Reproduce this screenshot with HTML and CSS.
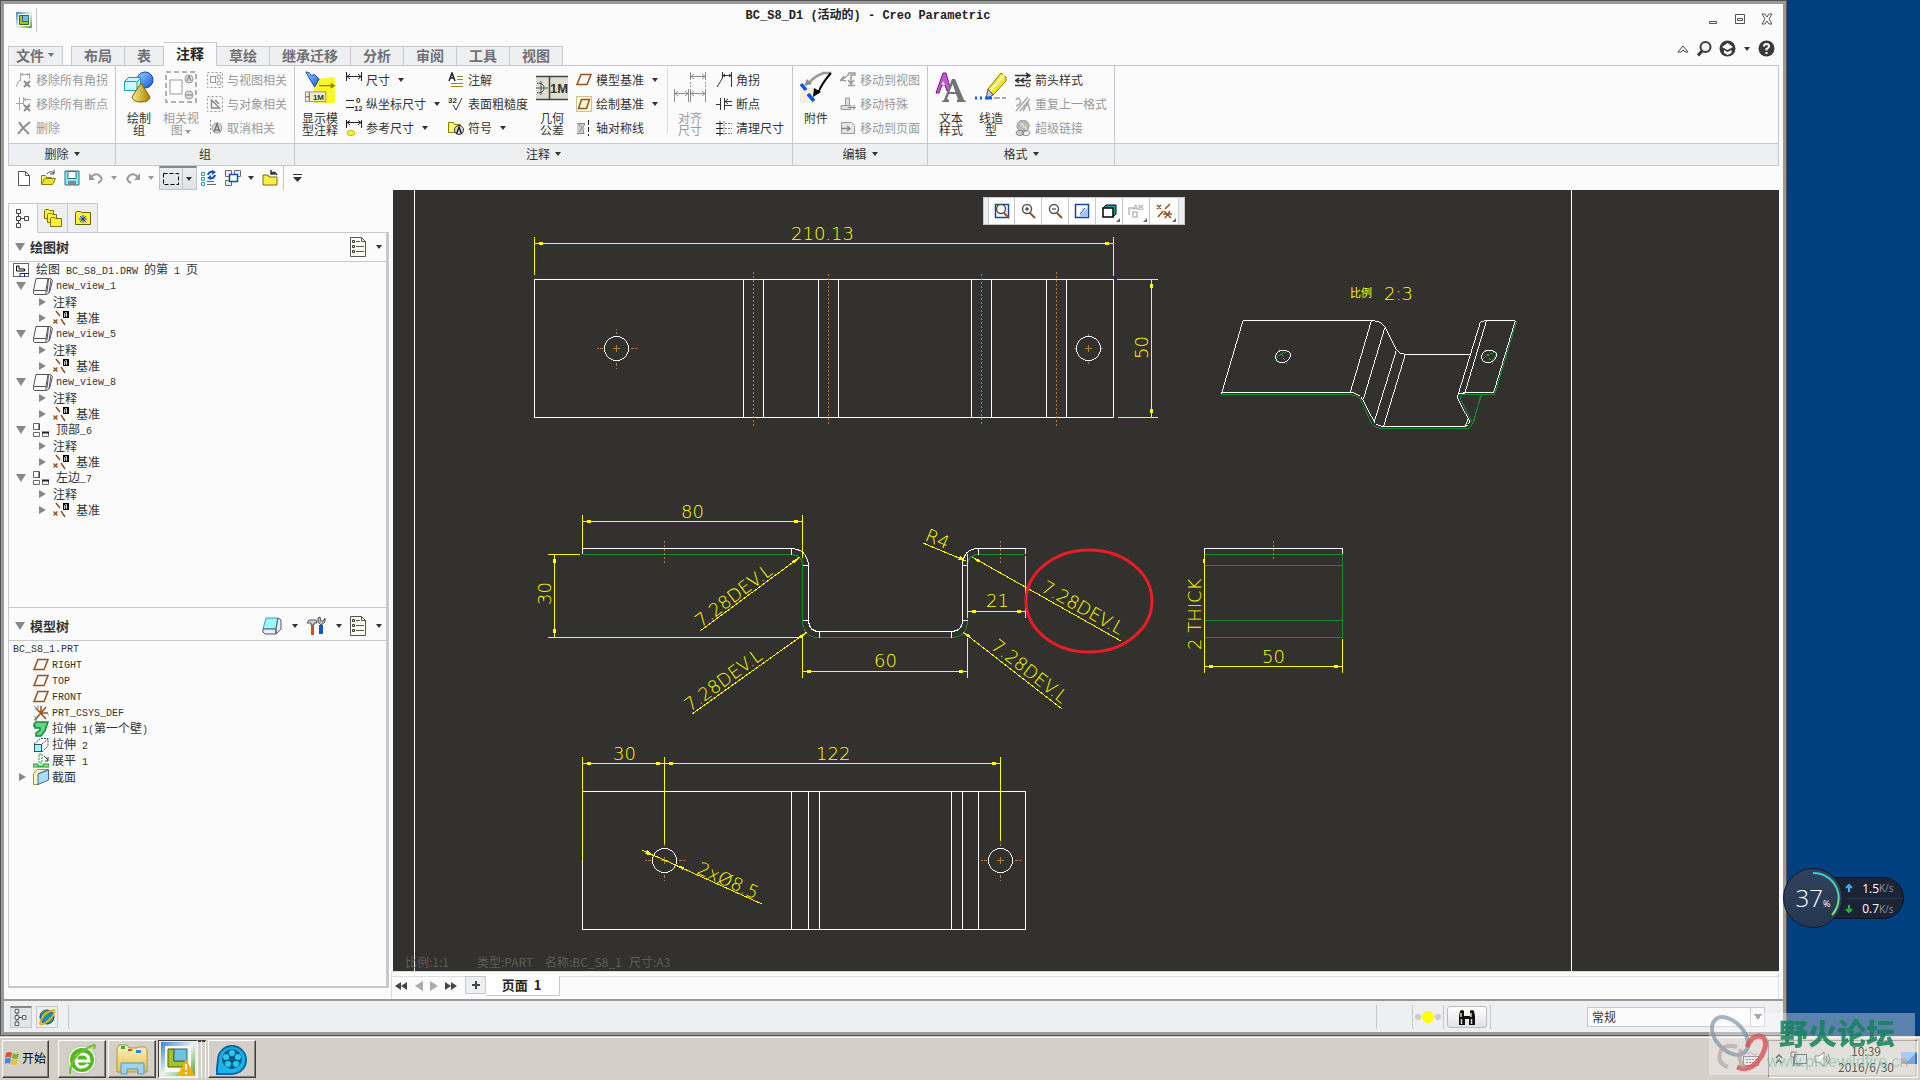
FILE: index.html
```html
<!DOCTYPE html>
<html lang="zh-CN">
<head>
<meta charset="utf-8">
<title>BC_S8_D1 (活动的) - Creo Parametric</title>
<link rel="stylesheet" href="styles.css">
</head>
<body>
<svg class="defs" width="0" height="0" aria-hidden="true">
  <defs>
    <linearGradient id="gBlue" x1="0" y1="0" x2="1" y2="1"><stop offset="0" stop-color="#9fd4ff"/><stop offset="1" stop-color="#0a55e0"/></linearGradient>
    <linearGradient id="gGold" x1="0" y1="0" x2="1" y2="0"><stop offset="0" stop-color="#fff08a"/><stop offset="1" stop-color="#a08000"/></linearGradient>
    <linearGradient id="gRing" x1="0" y1="0" x2="0" y2="1"><stop offset="0" stop-color="#2fd0d8"/><stop offset="1" stop-color="#86d870"/></linearGradient>
    <linearGradient id="gFolder" x1="0" y1="0" x2="0" y2="1"><stop offset="0" stop-color="#fdf3bc"/><stop offset="1" stop-color="#e5c254"/></linearGradient>
    <linearGradient id="gApp" x1="0" y1="0" x2="1" y2="1"><stop offset="0" stop-color="#2f86d6"/><stop offset=".5" stop-color="#e8f4ee"/><stop offset="1" stop-color="#4aa52c"/></linearGradient>
  </defs>
  <symbol id="app" viewBox="0 0 16 16"><rect width="16" height="16" fill="url(#gApp)"/><rect x="2" y="2" width="12" height="12" fill="#f4f8f4"/><path d="M3.500 3.500h3v6h6v3h-9z" fill="#a4c51e" stroke="#4c5a28"/><rect x="6.500" y="3.500" width="6" height="6" fill="#6cc3de" stroke="#40606a"/></symbol>
  <symbol id="rm-jog" viewBox="0 0 16 16"><path d="M4.500 1v8M13.500 1v6M5 2.500h8M0 15l2-5 2-2M7 1.500l-2 1 2 1M11 1.500l2 1-2 1" fill="none" stroke="#a8a8a8"/><path d="M8 9l6 6M14 9l-6 6" stroke="#8c8c8c" stroke-width="2"/></symbol>
  <symbol id="rm-brk" viewBox="0 0 16 16"><path d="M3.500 1v13M7.500 1v8M0 7.500h7M8 3.500h7M10 2l-2 1.500 2 1.500M9 12l5-5" fill="none" stroke="#a8a8a8"/><path d="M8 9l6 6M14 9l-6 6" stroke="#8c8c8c" stroke-width="2"/></symbol>
  <symbol id="del" viewBox="0 0 16 16"><path d="M3 2q4 7 10 12M14 2Q7 7 2 14" fill="none" stroke="#8c8c8c" stroke-width="2"/></symbol>
  <symbol id="shapes" viewBox="0 0 32 32"><circle cx="22" cy="9" r="8" fill="url(#gBlue)" stroke="#0648b8"/><path d="M1.500 10.500l4-4h12v13h-16z" fill="#c8fbff" stroke="#1a9aa8"/><path d="M1.500 10.500h12M18 7l-4 4v9" fill="none" stroke="#1a9aa8"/><path d="M18 12l9 14q-1 5-9 5t-9-5z" fill="url(#gGold)" stroke="#7a6200"/></symbol>
  <symbol id="relview" viewBox="0 0 32 32"><rect x="1" y="1" width="30" height="30" fill="none" stroke="#b0b0b0" stroke-width="2" stroke-dasharray="5 3"/><rect x="5" y="9" width="12" height="14" fill="#fff" stroke="#9a9a9a"/><circle cx="24" cy="8" r="4" fill="#ddd" stroke="#999"/><path d="M22 10l2-5 2 5" fill="none" stroke="#777"/><circle cx="24" cy="24" r="4" fill="#ddd" stroke="#999"/><path d="M21 24h6" stroke="#777"/></symbol>
  <symbol id="rv" viewBox="0 0 16 16"><rect x=".5" y=".5" width="15" height="15" fill="none" stroke="#999" stroke-dasharray="2 2"/><rect x="3.500" y="4.500" width="5" height="6" fill="none" stroke="#999"/><circle cx="12" cy="5" r="2" fill="none" stroke="#999"/><circle cx="12" cy="11" r="2" fill="none" stroke="#999"/></symbol>
  <symbol id="ro" viewBox="0 0 16 16"><rect x=".5" y=".5" width="15" height="15" fill="none" stroke="#999" stroke-dasharray="2 2"/><path d="M4.500 4v8h8zM8 4l4 4" fill="none" stroke="#888" stroke-width="1.500"/></symbol>
  <symbol id="rc" viewBox="0 0 16 16"><path d="M3.500 0v16" stroke="#999" stroke-dasharray="2 2"/><circle cx="10" cy="8" r="5" fill="#ddd" stroke="#999"/><path d="M7 12l3-8 3 8M8 10h4" fill="none" stroke="#777" stroke-width="1.500"/></symbol>
  <symbol id="dim" viewBox="0 0 16 16"><path d="M.5 0v9M15.500 0v9M1 4.500h14M4 2L1 4.500 4 7M12 2l3 2.500L12 7" fill="none" stroke="#222"/></symbol>
  <symbol id="refdim" viewBox="0 0 16 16"><path d="M.5 0v8M15.500 0v8M1 2.500h14M4 .5L1 2.500 4 5M12 .5l3 2L12 5" fill="none" stroke="#222"/><ellipse cx="5" cy="13" rx="4" ry="2.500" fill="#ffef3a" stroke="#c8b400"/></symbol>
  <symbol id="note" viewBox="0 0 16 16"><path d="M1 9l3-8 3 8M2 6h4" fill="none" stroke="#222" stroke-width="1.500"/><path d="M9 4.500h6M9 7.500h6M3 11.500h12M3 14.500h12" stroke="#998a10"/></symbol>
  <symbol id="sym" viewBox="0 0 16 16"><path d="M.5 12.500v-10h5l1 2h6v8z" fill="#fff27a" stroke="#8a8000"/><circle cx="11" cy="10" r="4.500" fill="#ddd" stroke="#333"/><path d="M8.500 14l2.500-7 2.500 7" fill="none" stroke="#222" stroke-width="1.500"/></symbol>
  <symbol id="plane" viewBox="0 0 16 16"><path d="M1 12.500L5 2.500h10l-4 10z" fill="none" stroke="#98501e" stroke-width="1.500"/></symbol>
  <symbol id="plane2" viewBox="0 0 16 16"><rect x=".5" y=".5" width="15" height="15" fill="#fffbd8" stroke="#c8c290"/><path d="M2.500 12.500l3-9h8l-3 9z" fill="none" stroke="#98501e" stroke-width="1.500"/></symbol>
  <symbol id="axis" viewBox="0 0 16 16"><path d="M1 3.500h8l-2 4 1 1-1 1 1 4H1M3 4l3 4-3 4" fill="#ccc" stroke="#888"/><path d="M12.500 0v16" stroke="#222" stroke-dasharray="5 2"/></symbol>
  <symbol id="align" viewBox="0 0 32 32"><path d="M.5 18v13M14.500 18v13M1 22.500h13M16.500 18v13M31.500 18v13M17 22.500h14M16.500 1v8M31.500 1v8M17 5.500h14M4 20l-3 2.500L4 25M11 20l3 2.500L11 25M20 20l-3 2.500 3 2.500M28 20l3 2.500-3 2.500M20 3l-3 2.500L20 8M28 3l3 2.500L28 8" fill="none" stroke="#8c8c8c"/><path d="M16.500 11v6M31.500 11v6" stroke="#999" stroke-dasharray="2 1"/></symbol>
  <symbol id="jog" viewBox="0 0 16 16"><path d="M6.500 0v6L1 15M15.500 0v15M7 3.500h8M9 2L7 3.500 9 5M13 2l2 1.500L13 5" fill="none" stroke="#333"/></symbol>
  <symbol id="brk" viewBox="0 0 16 16"><path d="M4.500 2v12M8.500 2v12M0 8.500h4M9 5.500h7M9 9.500h7M12 3L9 5.500 12 8" fill="none" stroke="#333"/></symbol>
  <symbol id="clean" viewBox="0 0 16 16"><path d="M0 3.500h7M0 8.500h7M0 13.500h7M4 1v15" stroke="#222"/><path d="M9 3.500h7M9 8.500h7M9 13.500h7M8 1v15" stroke="#777" stroke-dasharray="2 1"/></symbol>
  <symbol id="attach" viewBox="0 0 32 32"><path d="M0 17h15v15H0z" fill="#f2f0e4"/><path d="M24 2Q14 5 8 13M31 2H22" fill="none" stroke="#9a9a9a" stroke-width="2.500"/><path d="M4 15l3-7 5 5z" fill="#8a8a8a"/><path d="M31 2Q22 12 18 22" fill="none" stroke="#000" stroke-width="2"/><path d="M13 26l1-9 7 4z"/><path d="M1 13l5 6M8 23l6 7" stroke="#0d56d8" stroke-width="3.500"/></symbol>
  <symbol id="mv" viewBox="0 0 16 16"><path d="M7.500 4L9 1h6v2h-4v8M8 13.500h7M7 4L0 9M4 4L1 8l5 1M8 8l3 4 3-4" fill="none" stroke="#999" stroke-width="1.500"/></symbol>
  <symbol id="msp" viewBox="0 0 16 16"><path d="M1 13.500h10v-4H1zM5.500 9V2h4v7" fill="#ddd" stroke="#999"/><path d="M8 11.500h8M14 9v5" stroke="#888"/></symbol>
  <symbol id="mpg" viewBox="0 0 16 16"><path d="M1.500 13.500v-11h10l3 3v8z" fill="#e8e8e8" stroke="#999"/><path d="M1 8.500h8M7 6l3 2.500L7 11" fill="none" stroke="#888" stroke-width="1.500"/></symbol>
  <symbol id="tstyle" viewBox="0 0 32 32"><path d="M1 22L8 2h3l5 18h-4l-2-6H7l-3 8z" fill="#c05ad0" stroke="#7a128a"/><path d="M8 10l2 4H7z" fill="#fff"/><path d="M7 31v-1l2-1L17 8h3l9 21 2 1v1h-9v-2l1-1-2-5h-7l-2 5 2 1v2z" fill="#707274"/><path d="M17.500 13l3 8h-6z" fill="#fbfbfb"/></symbol>
  <symbol id="lstyle" viewBox="0 0 32 32"><path d="M13 18L26 2l5 4v4L18 24z" fill="#f2e62a" stroke="#8a7c00"/><path d="M15 20L29 4" stroke="#fffbc0" stroke-width="2"/><path d="M13 18l5 6-7 4z" fill="#ccc" stroke="#555"/><path d="M0 27h2M5 27h2M10 27h7" stroke="#0b5fe8" stroke-width="3"/><path d="M19 27h6M27 27h4" stroke="#aaa" stroke-width="2"/></symbol>
  <symbol id="arrow" viewBox="0 0 16 16"><path d="M0 3.500h14M11 1l4 2.500L11 6M0 8.500h16M4 6L1 8.500 4 11M9 6L6 8.500 9 11M0 13.500h10" fill="none" stroke="#333" stroke-width="1.500"/><circle cx="13" cy="13" r="2" fill="none" stroke="#333"/></symbol>
  <symbol id="repeat" viewBox="0 0 16 16"><path d="M1 4q2-4 4 0t-4 6M1 15L13 1M5 15L15 3M8 15l5-8 2 8" fill="none" stroke="#aaa" stroke-width="1.500"/></symbol>
  <symbol id="link" viewBox="0 0 16 16"><circle cx="8" cy="6" r="6" fill="#bbb" stroke="#999"/><path d="M5 4h3v3h3v3" fill="none" stroke="#eee"/><ellipse cx="5" cy="13" rx="4" ry="2.500" fill="#ccc" stroke="#888"/><ellipse cx="11" cy="13" rx="4" ry="2.500" fill="none" stroke="#888"/></symbol>
  <symbol id="new" viewBox="0 0 16 16"><path d="M2.500 1.500h7l4 4v10h-11zM9.500 1.500v4h4" fill="#fff" stroke="#555"/></symbol>
  <symbol id="open" viewBox="0 0 16 16"><path d="M1.500 14.500v-9h4l1 2h5v2" fill="#fff27a" stroke="#8a8000"/><path d="M1.500 14.500l3-6h11l-3 6z" fill="#f2e02a" stroke="#8a8000"/><path d="M7 4q3-4 7-1M14 0v4h-4" fill="none" stroke="#444"/></symbol>
  <symbol id="save" viewBox="0 0 16 16"><path d="M1 1h14v14H1z" fill="#7af0f8" stroke="#3c6a78"/><path d="M4 1.500h8v7H4z" fill="#fff" stroke="#3c6a78"/><path d="M4 11h8v4H4z" fill="#888"/></symbol>
  <symbol id="undo" viewBox="0 0 16 16"><path d="M3 7q5-5 9-1t-2 7" fill="none" stroke="#999" stroke-width="2"/><path d="M1 3v7h6z" fill="#999"/></symbol>
  <symbol id="redo" viewBox="0 0 16 16"><path d="M13 7q-5-5-9-1t2 7" fill="none" stroke="#999" stroke-width="2"/><path d="M15 3v7H9z" fill="#999"/></symbol>
  <symbol id="selbox" viewBox="0 0 16 16"><rect x=".5" y="2.500" width="15" height="11" fill="none" stroke="#000" stroke-dasharray="4 2"/></symbol>
  <symbol id="regen" viewBox="0 0 16 16"><path d="M.5 2.500h3v3h-3zM.5 7.500h3v3h-3zM.5 12.500h3v3h-3z" fill="#c8fbff" stroke="#3a9aa8"/><path d="M6 11.500h7M6 14.500h9" stroke="#666"/><path d="M7 5q1-4 5-3M14 5q-1 4-5 3" fill="none" stroke="#0a50c8" stroke-width="2"/><path d="M11 0l4 2-4 3zM10 5v5L6 8z" fill="#0a50c8"/></symbol>
  <symbol id="wins" viewBox="0 0 16 16"><path d="M.5.5h6v6h-6zM9.500.5h6v6h-6zM.5 10.500h6v5h-6z" fill="#eee" stroke="#667"/><rect x="4.500" y="4.500" width="8" height="7" fill="#fff" stroke="#1a4ab0" stroke-width="1.500"/></symbol>
  <symbol id="closef" viewBox="0 0 16 16"><path d="M1 15V5h5l1 2h8v8z" fill="#f8ee4a" stroke="#7a7000"/><path d="M9 4q3-4 6 1M9 0v4h4" fill="none" stroke="#333" stroke-width="1.500"/></symbol>
  <symbol id="tree" viewBox="0 0 16 20"><path d="M3.500 5v10M4 10.500h6" stroke="#444"/><path d="M1.500 1.500h4v4h-4zM1.500 8.500h4v4h-4zM1.500 15.500h4v4h-4zM9.500 8.500h4v4h-4z" fill="#fff" stroke="#444"/></symbol>
  <symbol id="layers" viewBox="0 0 20 20"><path d="M1.500 10.500v-8l1-1h3l1 1h4v8z" fill="#fdf03a" stroke="#7a7000"/><path d="M4.500 14.500v-8l1-1h3l1 1h4v8z" fill="#fdf03a" stroke="#7a7000"/><path d="M7.500 18.500v-8l1-1h3l1 1h6v8z" fill="#fdf03a" stroke="#7a7000"/></symbol>
  <symbol id="fav" viewBox="0 0 18 18"><path d="M1.500 15.500v-12l1-1h4l1 1h9v12z" fill="#fdf23a" stroke="#6a6200"/><path d="M9 6v8M5 10h8M6 7l6 6M12 7l-6 6" stroke="#0a2ac8"/></symbol>
  <symbol id="list" viewBox="0 0 16 20"><path d="M.5.5h11l4 4v15H.5z" fill="#fcfcf0" stroke="#555"/><path d="M11.500.5v4h4M6 4.500h4M6 9.500h8M6 14.500h8" stroke="#555" fill="none"/><path d="M2.500 3.500h2v2h-2zM2.500 8.500h2v2h-2zM2.500 13.500h2v2h-2z" fill="none" stroke="#333"/></symbol>
  <symbol id="sheet" viewBox="0 0 16 16"><rect x=".5" y="1.500" width="15" height="13" fill="#fff" stroke="#666"/><path d="M3.500 4v5h8V7H6V4z" fill="none" stroke="#000"/><path d="M7 15v-3.500h9M11.500 12v3" stroke="#1020c8" fill="none"/></symbol>
  <symbol id="view" viewBox="0 0 20 17"><path d="M3 .5h12l-2 12H.5zM.5 12.500v3l1 1h12l3-2 3-12-2-2h-3M13 12.500v4M15.500 1L14 14M18 1l-2 14" fill="none" stroke="#555"/></symbol>
  <symbol id="proj" viewBox="0 0 16 14"><path d="M.5.500h6v6h-6zM.5 9.500h6v4h-6zM9.500 9.500h6v4h-6z" fill="#fff" stroke="#666"/><path d="M6 1v6" stroke="#222"/><path d="M9 9.500h7" stroke="#222" stroke-width="2"/></symbol>
  <symbol id="datum" viewBox="0 0 16 16"><path d="M3 1l4 5M8 9l4 6M.5 9.500l4 4M4.500 9.500l-4 4" stroke="#98501e" stroke-width="1.500"/><rect x="10" y="1" width="6" height="7"/><path d="M11.500 7V3.500l1-1h1V7M12 5h2" stroke="#fff" stroke-width=".8" fill="none"/></symbol>
  <symbol id="csys" viewBox="0 0 16 16"><path d="M8 8V1M8 8h7M8 8l-6 7M3 3l10 11M13 2L8 8" stroke="#98501e" stroke-width="1.500"/><path d="M1 1l3 3M5 0v4H2M12 7l4 3M1 12h3l-3 3h3" stroke="#888" fill="none"/></symbol>
  <symbol id="wall" viewBox="0 0 16 16"><path d="M1 3l2-2h12l-3 9-4 5H3v-3l4-3V7H2V5H1z" fill="#62d488" stroke="#108a34" stroke-width="1.500"/></symbol>
  <symbol id="extr" viewBox="0 0 16 16"><rect x="1.500" y="7.500" width="7" height="7" fill="#9af4f8" stroke="#356"/><path d="M1 7l6-5M9 7l6-5M9 15l6-6M8 1.500h7v7" fill="none" stroke="#356" stroke-dasharray="2 1"/></symbol>
  <symbol id="flat" viewBox="0 0 16 16"><path d="M6 1h3v9H6z" fill="none" stroke="#10a020" stroke-dasharray="2 1"/><path d="M0 14v-3h5v2h5v-2h6v3z" fill="#9cd8a0" stroke="#10a020"/><path d="M11 3l4 4M15 4v4h-3" stroke="#333" fill="none"/></symbol>
  <symbol id="sect" viewBox="0 0 16 16"><path d="M.5 4.500l4-4h11l-10 4v11h-5z" fill="#fdf6c0" stroke="#998a50"/><path d="M5 5l10.500-4v10L5 15.500z" fill="#a8dcf4" stroke="#3a6a9a"/></symbol>
  <symbol id="cube" viewBox="0 0 20 20"><path d="M4 2h12l-2 11H1z" fill="#9cf6fa" stroke="#3aa0a8"/><path d="M1 13h13v5H3l-2-2zM16 2l3 2v9l-5 5v-5z" fill="#e8f0f0" stroke="#556"/></symbol>
  <symbol id="tools" viewBox="0 0 20 20"><path d="M1 7l2-3h7l1 3H8v2H5V7z" fill="#ccd4d8" stroke="#556"/><path d="M6.500 9v10" stroke="#c8501a" stroke-width="3"/><path d="M15 9v9" stroke="#1450d0" stroke-width="4"/><path d="M12 2v4l3 3 4-3V2l-2 3h-2l-1-4z" fill="#bbb" stroke="#555"/></symbol>
  <symbol id="web" viewBox="0 0 18 18"><circle cx="9" cy="9" r="7" fill="#1e86d0" stroke="#145"/><path d="M4 4q4-3 7 0l-2 4-4 1zM10 10l5-2-1 5-4 2z" fill="#2ca83c"/><path d="M2 16Q4 4 16 2q2 4-5 10T2 16" fill="none" stroke="#e8b020" stroke-width="2"/></symbol>
  <symbol id="bino" viewBox="0 0 18 18"><path d="M2 3q2-2 4 0v5h6V3q2-2 4 0l1 5v9h-6v-6H7v6H1V8z" fill="#111"/><path d="M3 5v4M13 5v4M3.500 11v5M13.500 11v5" stroke="#d8d8c0" stroke-width="1.500"/></symbol>
  <symbol id="mag" viewBox="0 0 16 16"><circle cx="7" cy="6" r="4.500" fill="#fff" stroke="#555" stroke-width="1.500"/><path d="M10 10l5 5" stroke="#98501e" stroke-width="2"/></symbol>
</svg>

<div class="desktop">
<main class="window"><div class="frame">
  <header class="titlebar">
    <svg class="app" width="16" height="16"><use href="#app"/></svg><span class="tsep"></span>
    <h1>BC_S8_D1 (活动的) - Creo Parametric</h1>
    <div class="winctl">
      <button aria-label="最小化"><svg width="12" height="12"><path d="M2.500 8.500h7v2h-7z" fill="none" stroke="#555"/></svg></button>
      <button aria-label="还原"><svg width="12" height="12"><path d="M1.500 1.500h9v9h-9zM3.500 5.500h5v2h-5z" fill="none" stroke="#555"/></svg></button>
      <button aria-label="关闭"><svg width="12" height="12"><path d="M1 1h3l2 3 2-3h3L8 6l3 5H8L6 8l-2 3H1l3-5z" fill="#fff" stroke="#555"/></svg></button>
    </div>
  </header>

  <nav class="tabs">
    <button class="tab file">文件<i class="caret"></i></button>
    <button class="tab first">布局</button><button class="tab">表</button><button class="tab on">注释</button><button class="tab">草绘</button><button class="tab">继承迁移</button><button class="tab">分析</button><button class="tab">审阅</button><button class="tab">工具</button><button class="tab">视图</button>
    <div class="tabtools">
      <button aria-label="折叠功能区"><svg width="12" height="10"><path d="M1 8l5-6 5 6H8L6 6 4 8z" fill="#fff" stroke="#444"/></svg></button>
      <button aria-label="搜索"><svg width="16" height="17"><circle cx="9.500" cy="7" r="5" fill="#eef4fa" stroke="#3a3a3c" stroke-width="2"/><path d="M6 11l-4 4.500" stroke="#3a3a3c" stroke-width="3"/></svg></button>
      <button aria-label="学习"><svg width="17" height="17"><circle cx="8.500" cy="8.500" r="8" fill="#3a3a3c"/><path d="M3 7l5.500-4L14 7l-5.500 3zM5 10l3.500 2 4-2v3l-4 2-3.500-2z" fill="#fff"/></svg><i class="caret"></i></button>
      <button aria-label="帮助"><svg width="17" height="17"><circle cx="8.500" cy="8.500" r="8" fill="#3a3a3c"/><path d="M6 6.500q0-2.500 2.500-2.500T11 6.300Q11 8 8.500 9v1.500M8.500 12v2" fill="none" stroke="#fff" stroke-width="2"/></svg></button>
    </div>
  </nav>

  <section class="ribbon">
    <div class="group g1">
      <div class="tools"><div class="col dim">
        <button class="item"><svg><use href="#rm-jog"/></svg>移除所有角拐</button>
        <button class="item"><svg><use href="#rm-brk"/></svg>移除所有断点</button>
        <button class="item"><svg><use href="#del"/></svg>删除</button>
      </div></div>
      <div class="glabel">删除<i class="caret"></i></div>
    </div>
    <div class="group g2">
      <div class="tools">
        <button class="big w40"><svg><use href="#shapes"/></svg><span>绘制<br>组</span></button>
        <button class="big w44 dim"><svg><use href="#relview"/></svg><span>相关视<br>图 <i class="caret"></i></span></button>
        <div class="col dim">
          <button class="item"><svg><use href="#rv"/></svg>与视图相关</button>
          <button class="item"><svg><use href="#ro"/></svg>与对象相关</button>
          <button class="item"><svg><use href="#rc"/></svg>取消相关</button>
        </div>
      </div>
      <div class="glabel">组</div>
    </div>
    <div class="group g3">
      <div class="tools">
        <button class="big w44"><svg viewBox="0 0 34 36"><path d="M10 9l24-2v29H10z" fill="#fbf52a"/><path d="M10 9l4 4-4 4 4 4-4 4M34 7l-4 4 4 4-4 4 4 4-4 4" fill="none" stroke="#fff9a0" stroke-dasharray="1 1"/><path d="M16 16.500h16M29 14l4 2.500-4 2.500" fill="none" stroke="#8a7a00" stroke-width="1.500"/><path d="M1 1l4 1 2 3 4-1 5 5-5 9-5-8z" fill="url(#gBlue)" stroke="#0a3a90"/><rect x=".5" y="23.500" width="23" height="11" fill="#efeec8" stroke="#888"/><path d="M5 24v10M1 29h4" stroke="#555"/><text x="9" y="33" font-size="9" font-weight="bold" fill="#333" font-family="Liberation Sans">1M</text></svg><span>显示模<br>型注释</span></button>
        <div class="col w102">
          <button class="item"><svg><use href="#dim"/></svg>尺寸<i class="caret"></i></button>
          <button class="item"><svg><path d="M0 4.500h8M0 11.500h8" stroke="#222"/><text x="10" y="7" font-size="8" font-weight="bold" fill="#333" font-family="Liberation Sans">0</text><text x="8" y="15" font-size="8" font-weight="bold" fill="#333" font-family="Liberation Sans">12</text></svg>纵坐标尺寸<i class="caret"></i></button>
          <button class="item"><svg><use href="#refdim"/></svg>参考尺寸<i class="caret"></i></button>
        </div>
        <div class="col w88">
          <button class="item"><svg><use href="#note"/></svg>注解</button>
          <button class="item"><svg><path d="M5 9l3 5 6-12" fill="none" stroke="#333"/><text x="0" y="7" font-size="8" font-weight="bold" fill="#333" font-family="Liberation Sans">32</text></svg>表面粗糙度</button>
          <button class="item"><svg><use href="#sym"/></svg>符号<i class="caret"></i></button>
        </div>
        <button class="big w40"><svg><rect y="5" width="32" height="24" fill="#deded2"/><path d="M0 5.500h32M0 28.500h32M13.500 5v24" stroke="#444" stroke-width="1.500"/><path d="M0 17h12M5 10v14" stroke="#555"/><path d="M1 12q7 0 7 5t-7 5" fill="none" stroke="#555"/><text x="14" y="22" font-size="13" font-weight="bold" fill="#333" font-family="Liberation Sans">1M</text></svg><span>几何<br>公差</span></button>
        <div class="col w95">
          <button class="item"><svg><use href="#plane"/></svg>模型基准<i class="caret"></i></button>
          <button class="item"><svg><use href="#plane2"/></svg>绘制基准<i class="caret"></i></button>
          <button class="item"><svg><use href="#axis"/></svg>轴对称线</button>
        </div>
        <span class="rsep"></span>
        <button class="big w44 dim"><svg><use href="#align"/></svg><span>对齐<br>尺寸</span></button>
        <div class="col">
          <button class="item"><svg><use href="#jog"/></svg>角拐</button>
          <button class="item"><svg><use href="#brk"/></svg>断点</button>
          <button class="item"><svg><use href="#clean"/></svg>清理尺寸</button>
        </div>
      </div>
      <div class="glabel">注释<i class="caret"></i></div>
    </div>
    <div class="group g4">
      <div class="tools">
        <button class="big w40"><svg><use href="#attach"/></svg><span>附件</span></button>
        <div class="col dim">
          <button class="item"><svg><use href="#mv"/></svg>移动到视图</button>
          <button class="item"><svg><use href="#msp"/></svg>移动特殊</button>
          <button class="item"><svg><use href="#mpg"/></svg>移动到页面</button>
        </div>
      </div>
      <div class="glabel">编辑<i class="caret"></i></div>
    </div>
    <div class="group g5">
      <div class="tools">
        <button class="big w40"><svg><use href="#tstyle"/></svg><span>文本<br>样式</span></button>
        <button class="big w40"><svg><use href="#lstyle"/></svg><span>线造<br>型</span></button>
        <div class="col">
          <button class="item"><svg><use href="#arrow"/></svg>箭头样式</button>
          <button class="item dim"><svg><use href="#repeat"/></svg>重复上一格式</button>
          <button class="item dim"><svg><use href="#link"/></svg>超级链接</button>
        </div>
      </div>
      <div class="glabel">格式<i class="caret"></i></div>
    </div>
    <div class="group rest"><div class="tools"></div><div class="glabel"></div></div>
  </section>

  <div class="qat">
    <button aria-label="新建"><svg><use href="#new"/></svg></button>
    <button aria-label="打开"><svg><use href="#open"/></svg></button>
    <button aria-label="保存"><svg><use href="#save"/></svg></button>
    <button class="dim" aria-label="撤消"><svg><use href="#undo"/></svg><i class="caret"></i></button>
    <button class="dim" aria-label="重做"><svg><use href="#redo"/></svg><i class="caret"></i></button>
    <button class="picked" aria-label="选择"><svg><use href="#selbox"/></svg><i class="caret"></i></button>
    <button aria-label="更新"><svg><use href="#regen"/></svg></button>
    <button aria-label="窗口"><svg><use href="#wins"/></svg><i class="caret"></i></button>
    <button aria-label="关闭窗口"><svg><use href="#closef"/></svg></button>
    <span class="qsep"></span>
    <button aria-label="自定义"><svg class="more"><path d="M0 1.500h9" stroke="#333"/><path d="M0 4h9L4.500 9z" fill="#333"/></svg></button>
  </div>

  <div class="work">
    <aside class="side">
      <div class="stabs">
        <button class="on" aria-label="树"><svg width="16" height="20"><use href="#tree"/></svg></button>
        <button aria-label="文件夹"><svg width="20" height="20"><use href="#layers"/></svg></button>
        <button aria-label="收藏夹"><svg width="18" height="18"><use href="#fav"/></svg></button>
      </div>
      <div class="panels">
        <section class="panel top">
          <header><i class="down"></i><h2>绘图树</h2><span class="ptools"><button aria-label="设置"><svg width="16" height="20"><use href="#list"/></svg><i class="caret"></i></button></span></header>
          <ul class="t">
            <li class="root"><svg width="16" height="16"><use href="#sheet"/></svg><span>绘图<b> BC_S8_D1.DRW </b>的第<b> 1 </b>页</span></li>
            <li class="l1"><i class="down"></i><svg width="20" height="17"><use href="#view"/></svg><b>new_view_1</b></li>
            <li class="l2"><i class="right"></i>注释</li>
            <li class="l2"><i class="right"></i><svg width="16" height="16"><use href="#datum"/></svg>基准</li>
            <li class="l1"><i class="down"></i><svg width="20" height="17"><use href="#view"/></svg><b>new_view_5</b></li>
            <li class="l2"><i class="right"></i>注释</li>
            <li class="l2"><i class="right"></i><svg width="16" height="16"><use href="#datum"/></svg>基准</li>
            <li class="l1"><i class="down"></i><svg width="20" height="17"><use href="#view"/></svg><b>new_view_8</b></li>
            <li class="l2"><i class="right"></i>注释</li>
            <li class="l2"><i class="right"></i><svg width="16" height="16"><use href="#datum"/></svg>基准</li>
            <li class="l1 p"><i class="down"></i><svg width="16" height="14"><use href="#proj"/></svg><span>顶部<b>_6</b></span></li>
            <li class="l2"><i class="right"></i>注释</li>
            <li class="l2"><i class="right"></i><svg width="16" height="16"><use href="#datum"/></svg>基准</li>
            <li class="l1 p"><i class="down"></i><svg width="16" height="14"><use href="#proj"/></svg><span>左边<b>_7</b></span></li>
            <li class="l2"><i class="right"></i>注释</li>
            <li class="l2"><i class="right"></i><svg width="16" height="16"><use href="#datum"/></svg>基准</li>
          </ul>
        </section>
        <section class="panel model">
          <header><i class="down"></i><h2>模型树</h2><span class="ptools">
            <button aria-label="显示"><svg width="20" height="20"><use href="#cube"/></svg><i class="caret"></i></button>
            <button aria-label="工具"><svg width="20" height="20"><use href="#tools"/></svg><i class="caret"></i></button>
            <button aria-label="设置"><svg width="16" height="20"><use href="#list"/></svg><i class="caret"></i></button></span></header>
          <ul class="t">
            <li class="root"><b>BC_S8_1.PRT</b></li>
            <li class="m"><svg width="16" height="16"><use href="#plane"/></svg><b>RIGHT</b></li>
            <li class="m"><svg width="16" height="16"><use href="#plane"/></svg><b>TOP</b></li>
            <li class="m"><svg width="16" height="16"><use href="#plane"/></svg><b>FRONT</b></li>
            <li class="m"><svg width="16" height="16"><use href="#csys"/></svg><b>PRT_CSYS_DEF</b></li>
            <li class="m"><svg width="16" height="16"><use href="#wall"/></svg><span>拉伸<b> 1(</b>第一个壁<b>)</b></span></li>
            <li class="m"><svg width="16" height="16"><use href="#extr"/></svg><span>拉伸<b> 2</b></span></li>
            <li class="m"><svg width="16" height="16"><use href="#flat"/></svg><span>展平<b> 1</b></span></li>
            <li class="m open"><i class="right"></i><svg width="16" height="16"><use href="#sect"/></svg>截面</li>
          </ul>
        </section>
      </div>
    </aside>

    <section class="stage">
      <div class="canvas">
        <svg class="drawing" width="100%" height="100%">
          <g transform="translate(-393 -190)" fill="none" shape-rendering="crispEdges">
            <path class="w" d="M414.500 190V971M1571.500 190V971"/>
            <!-- flat pattern -->
            <path class="w" d="M534.500 279.500H1113.500V417.500H534.500zM743.500 279V417M763.500 279V417M818.500 279V417M838.500 279V417M971.500 279V417M991.500 279V417M1046.500 279V417M1066.500 279V417"/>
            <path class="o dash" d="M753.500 272V426M828.500 274V426M981.500 274V426M1056.500 272V426"/>
            <circle class="w" cx="616.500" cy="348.500" r="12"/><circle class="w" cx="1088.500" cy="348.500" r="12"/>
            <path class="o" d="M613 348.500h7M616.500 345v7M597 348.500h2M600 348.500h3M631 348.500h3M635 348.500h2M616.500 329v1M616.500 332v2M616.500 363v3M616.500 368v1M1085 348.500h7M1088.500 345v7M1074 348.500h2M1101 348.500h2M1088.500 334v2M1088.500 362v2"/>
            <path class="y" d="M534.500 237V275M1113.500 237V276M535 243.500H1113M1117 279.500H1158M1118 417.500H1158M1151.500 280V417"/>
            <path class="a" d="M535 243.500l8-2v4zM1113 243.500l-8-2v4zM1151.500 280l-2 8h4zM1151.500 417l-2-8h4z"/>
            <!-- formed side view -->
            <path class="g" d="M583 554.500H791Q802.500 555 802.500 565V620Q803 637.500 819 637.500H951.500Q967.500 637.500 967.500 620V565Q968 554.500 978.500 554.500H1025"/>
            <path class="w" d="M582.500 554V548.500H791Q807 549 808.500 565.500V620.500Q809 631.500 819 631.500H951.500Q962.500 631 962.500 620.500V565.500Q963 549 978.500 548.500H1025.500V554M791.500 549v6M978.500 549v6M803 565.500h5M803 620.500h5M963 565.500h5M963 620.500h5M819.500 632v6M951.500 632v6"/>
            <path class="o dash" d="M664.500 541V563M1000.500 541V563"/>
            <path class="y" d="M582.500 515V548M802.500 515V558M583 521.500H802M548 554.500H580M548 637.500H803M554.500 555V637M802.500 638V678M967.500 638V678M803 671.500H967M967.500 554V618M1025.500 556V618M968 611.500H1025M923 543L966 561M700 631L800 557M692 714L807 632M972 557L1121 641M963 632L1062 709"/>
            <path class="a" d="M583 521.500l8-2v4zM802 521.500l-8-2v4zM554.500 555l-2 8h4zM554.500 637l-2-8h4zM803 671.500l8-2v4zM967 671.500l-8-2v4zM968 611.500l8-2v4zM1025 611.500l-8-2v4zM966 561l-8-1 2-4zM800 557l-8 4 2 3zM807 632l-8 4 2 3zM972 557l8 3-2 3zM963 632l7 3-2 3z"/>
            <!-- end view -->
            <path class="g" d="M1205 554.500H1342.500V637.500H1205M1205 565.500H1342M1205 620.500H1342"/>
            <path class="w" d="M1204.500 554V548.500H1342.500V554"/>
            <path class="o dash" d="M1273.500 541V560"/>
            <path class="y" d="M1204.500 554V673M1342.500 639V673M1205 666.500H1342"/>
            <path class="a" d="M1205 666.500l8-2v4zM1342 666.500l-8-2v4zM1204.500 555l-2 8h3z"/>
            <!-- plan view -->
            <path class="w" d="M582.500 791.500H1025.500V929.500H582.500zM791.500 791V929M808.500 791V929M819.500 791V929M951.500 791V929M962.500 791V929M978.500 791V929"/>
            <circle class="w" cx="664.500" cy="860.500" r="12"/><circle class="w" cx="1000.500" cy="860.500" r="12"/>
            <path class="o" d="M661 860.500h7M664.500 857v7M645 860.500h2M648 860.500h3M679 860.500h3M683 860.500h2M664.500 844v2M664.500 875v3M664.500 880v1M997 860.500h7M1000.500 857v7M981 860.500h2M984 860.500h3M1015 860.500h3M1019 860.500h2M1000.500 842v1M1000.500 844v2M1000.500 875v3M1000.500 880v1"/>
            <path class="y" d="M582.500 757V860M664.500 757V844M1000.500 757V841M583 763.500H1000M642 850L762 904"/>
            <path class="a" d="M583 763.500l8-2v4zM664 763.500l-8-2v4zM665 763.500l8-2v4zM1000 763.500l-8-2v4zM654 856l-9-2 2-4zM676 865l8 2-1 3z"/>
            <!-- isometric view -->
            <g transform="translate(1180 270) scale(.33333)" class="iso">
              <path class="g" d="M124 374H512Q530 376 541 388L574 459Q584 474 604 475H866Q876 472 880 452L905 375M875 455L841 386V379L848 373H944L1010 154M882 452L902 378M288 268Q300 246 324 245M906 272Q920 248 950 248L936 274"/>
              <path class="w" d="M189 152H580Q602 154 615 170L650 240Q658 252 676 253H870M189 152L124 373V367H512Q536 370 548 388L582 454Q590 468 610 469H854Q870 466 868 452L834 388Q832 374 836 368L900 160Q904 152 916 152H1006L941 367H850M574 153L510 370M614 174L550 388M648 244L583 455M675 256L610 472M919 154L855 367M835 370H856M854 472L864 448"/>
              <ellipse class="w" cx="309" cy="259" rx="23" ry="18" transform="rotate(-18 309 259)"/><ellipse class="w" cx="927" cy="259" rx="23" ry="18" transform="rotate(-18 927 259)"/>
              <path class="o" stroke-dasharray="7 8" d="M298 238L320 282M916 238L938 282"/>
            </g>
            <ellipse cx="1089" cy="601" rx="63" ry="51" stroke="#ed1c24" stroke-width="3" shape-rendering="auto"/>
          </g>
          <g transform="translate(-393 -190)" class="dims">
            <text x="791" y="240">210.13</text>
            <text transform="translate(1148 359) rotate(-90)">50</text>
            <text class="cjk" x="1350" y="297">比例</text><text x="1384" y="300">2:3</text>
            <text x="681" y="518">80</text>
            <text transform="translate(551 605) rotate(-90)">30</text>
            <text x="874" y="667">60</text><text x="986" y="607">21</text>
            <text transform="translate(924 540) rotate(23)">R4</text>
            <text transform="translate(701 628) rotate(-37)">7.28DEV.L</text>
            <text transform="translate(690 712) rotate(-36)">7.28DEV.L</text>
            <text transform="translate(1040 591) rotate(29)">7.28DEV.L</text>
            <text transform="translate(990 648) rotate(38)">7.28DEV.L</text>
            <text transform="translate(1201 650) rotate(-90)">2 THICK</text>
            <text x="1262" y="663">50</text>
            <text x="613" y="760">30</text><text x="816" y="760">122</text>
            <text transform="translate(696 873) rotate(24)">2xØ8.5</text>
          </g>
          <g transform="translate(-393 -190)" class="info"><text x="405" y="967">比例:1:1</text><text x="477" y="967">类型:PART</text><text x="545" y="967">名称:BC_S8_1</text><text x="629" y="967">尺寸:A3</text></g>
        </svg>
        <div class="viewbar">
          <button aria-label="重新调整"><svg><rect x="1.500" y="1.500" width="13" height="13" fill="#fff" stroke="#1446a0" stroke-width="1.500"/><use href="#mag"/></svg></button>
          <button aria-label="放大"><svg><use href="#mag"/><path d="M5 6h4M7 4v4" stroke="#222"/></svg></button>
          <button aria-label="缩小"><svg><use href="#mag"/><path d="M5 6h4" stroke="#222"/></svg></button>
          <button aria-label="重画"><svg><rect x="1.500" y="1.500" width="13" height="13" fill="#fff" stroke="#1446a0" stroke-width="1.500"/><path d="M14 4v10H4z" fill="#a4c6ee"/><path d="M11 5L6 11" stroke="#1446a0"/></svg></button>
          <button class="more" aria-label="显示样式"><svg><path d="M2 5l3-3h10v9l-3 3z" fill="#18a0a0" stroke="#000"/><rect x="2" y="5" width="10" height="9" fill="#fff" stroke="#000" stroke-width="1.500"/></svg></button>
          <button class="more" aria-label="注释显示"><svg><path d="M1 12V5h6M5 9h4v5H5z" fill="none" stroke="#bbb" stroke-width="1.500"/><text x="5" y="7" font-size="8" fill="#999" font-family="Liberation Sans">AB</text></svg></button>
          <button class="more" aria-label="基准显示"><svg><path d="M1 2l4 4M5 2L1 6M9 6l5-5M2 14l5-6M8 8l7 7M14 8l-5 7M7 11h9" stroke="#98501e" stroke-width="1.500"/></svg></button>
        </div>
      </div>
      <div class="sheets">
        <button class="n" aria-label="首页"><svg width="12" height="10"><path d="M6 1v8L0 5zM12 1v8L6 5z" fill="#444"/></svg></button>
        <button class="n" aria-label="上一页"><svg width="8" height="10"><path d="M8 0v10L0 5z" fill="#aaa"/></svg></button>
        <button class="n" aria-label="下一页"><svg width="8" height="10"><path d="M0 0v10l8-5z" fill="#aaa"/></svg></button>
        <button class="n" aria-label="末页"><svg width="12" height="10"><path d="M0 1v8l6-4zM6 1v8l6-4z" fill="#444"/></svg></button>
        <button class="plus" aria-label="添加页面"><svg width="8" height="8"><path d="M0 4h8M4 0v8" stroke="#444" stroke-width="2"/></svg></button>
        <button class="page"><span>页面</span><span>1</span></button>
      </div>
    </section>
  </div>

  <footer class="status">
    <button class="sb in" aria-label="导航器"><svg width="16" height="18"><use href="#tree"/></svg></button>
    <button class="sb" aria-label="浏览器"><svg width="18" height="18"><use href="#web"/></svg></button>
    <span class="ssep"></span>
    <div class="right">
      <span class="ssep"></span><span class="ssep far"></span>
      <svg width="30" height="14"><circle cx="5" cy="7" r="3" fill="#ccc"/><circle cx="15" cy="7" r="6" fill="#ff0"/><circle cx="25" cy="7" r="3" fill="#ccc"/></svg>
      <span class="ssep tight"></span>
      <button class="find" aria-label="查找"><svg width="18" height="18"><use href="#bino"/></svg></button>
      <span class="ssep tight"></span>
      <select aria-label="选择过滤器"><option>常规</option></select>
    </div>
  </footer>
</div></main>

<aside class="speed">
  <div class="pill"><div><svg width="8" height="8"><path d="M4 8V3M1 4l3-3 3 3" stroke="#34b6f0" stroke-width="2" fill="none"/></svg><span>1.5</span><small>K/s</small></div><div><svg width="8" height="8"><path d="M4 0v5M1 4l3 3 3-3" stroke="#22b83a" stroke-width="2" fill="none"/></svg><span>0.7</span><small>K/s</small></div></div>
  <div class="dial"><svg width="58" height="58"><path d="M29 4A25 25 0 0 1 48 46" fill="none" stroke="url(#gRing)" stroke-width="2"/></svg><span>37</span><small>%</small></div>
</aside>
</div>

<footer class="taskbar">
  <button class="start"><svg width="16" height="16"><path d="M1 3q3-2 6 0L6 8Q3 6 0 8z" fill="#e8502a"/><path d="M8 3q3 2 6 0l-1 5q-3 2-6 0z" fill="#7ab82a"/><path d="M0 9q3-2 6 0l-1 5q-2-2-5 0z" fill="#3a8ae0"/><path d="M7 9q3 2 6 0l-1 5q-3 2-6 0z" fill="#f4c02a"/></svg>开始</button>
  <button class="task" aria-label="浏览器"><svg width="32" height="32"><circle cx="16" cy="17" r="14" fill="#fff" stroke="#b8b8b0"/><circle cx="16" cy="17" r="12" fill="#52b81e"/><path d="M10 18h13q0-7-7-7t-6 7 6 6q4 0 6-3" fill="none" stroke="#fff" stroke-width="3"/><path d="M4 31Q4 11 28 2q2 0 0 4" fill="none" stroke="#6cc42e" stroke-width="2"/></svg></button>
  <button class="task" aria-label="资源管理器"><svg width="32" height="32"><path d="M1 29V6l2-4h8l2 3h8l2-1h6l2 3v22z" fill="url(#gFolder)" stroke="#b8962e"/><path d="M5 3h4v3H5z" fill="#28b04a"/><path d="M12 6h4v2h-4z" fill="#d84a2a"/><path d="M20 7h5v3h-5z" fill="#2a8ae0"/><path d="M5 31V20h23v11h-6v-5H11v5z" fill="#9ed4f0" stroke="#4a9ac8"/></svg></button>
  <div class="stack"><button class="task on" aria-label="Creo Parametric"><svg width="34" height="34"><rect width="34" height="34" fill="url(#gApp)"/><rect x="4" y="4" width="26" height="26" fill="#f6faf6"/><path d="M7 7h6v12h13v6H7z" fill="#a4c51e" stroke="#4c5a28"/><rect x="13" y="7" width="13" height="12" fill="#6cc3de" stroke="#40606a"/><path d="M25 17l9 17H16z" fill="#f4ae14"/><path d="M25 22v6M25 30v2" stroke="#fff" stroke-width="2"/></svg></button><span class="under"></span><span class="under"></span></div>
  <button class="task" aria-label="播放器"><svg width="34" height="32"><path d="M3 17a14 14 0 1 1 14 14H2v-6z" fill="#1ab4ea" stroke="#0a6aa0" stroke-width="2"/><circle cx="17" cy="16" r="10" fill="#0d5c86"/><g fill="#2cc8f4"><circle cx="17" cy="10" r="3"/><circle cx="11" cy="14" r="3"/><circle cx="23" cy="14" r="3"/><circle cx="13" cy="21" r="3"/><circle cx="21" cy="21" r="3"/></g></svg></button>
  <svg class="ime" width="17" height="16"><rect x=".5" y="5.500" width="15" height="9" fill="#ddd" stroke="#666"/><path d="M3 8.500h11M3 11.500h11" stroke="#666" stroke-dasharray="2 1"/><path d="M5 3q3-3 5 0t4-1" fill="none" stroke="#888"/></svg>
  <div class="tray">
    <svg width="8" height="12"><path d="M1 5l3-3 3 3M1 10l3-3 3 3" fill="none" stroke="#222" stroke-width="1.500"/></svg>
    <svg width="17" height="16"><rect x="4.500" y="3.500" width="12" height="9" fill="#c8d0d8" stroke="#444"/><path d="M1 1h5v5H1zM3.500 6v8H12" fill="none" stroke="#444"/></svg>
    <svg width="17" height="16"><path d="M1 5h4l5-4v14l-5-4H1z" fill="#fff" stroke="#555"/><path d="M12 5q2 3 0 6M14 3q3 5 0 10" fill="none" stroke="#555"/></svg>
    <time>10:39<br>2016/6/30</time>
    <svg width="16" height="14"><rect width="16" height="12" fill="#2f76cc"/><path d="M0 0h16L4 12H0z" fill="#7fb2ea"/><circle cx="3" cy="10" r="2" fill="#e8502a"/></svg>
  </div>
</footer>

<div class="mark">
  <svg width="62" height="62"><g fill="none"><ellipse cx="21" cy="23" rx="22" ry="14" transform="rotate(48 21 23)" stroke="#7f92a4" stroke-width="4" opacity=".7"/><path d="M38 34Q44 20 54 24 60 30 52 44 42 60 28 54" stroke="#d8484c" stroke-width="5" opacity=".75"/><path d="M32 36q-4 14 4 18M28 34q-14-4-17 6t8 14" stroke="#b4a4a8" stroke-width="4" opacity=".7"/></g></svg>
  <div><strong>野火论坛</strong><span>www.proewildfire.cn</span></div>
</div>
</body>
</html>
```
FILE: styles.css
```css
* { box-sizing: border-box; }
html, body { height: 100%; }
body {
  margin: 0; display: grid; grid-template-rows: 1fr 44px; min-height: 100vh;
  background: #004080; color: #333; overflow: hidden;
  font: 12px/12px "Noto Sans CJK SC", sans-serif;
}
button { margin: 0; padding: 0; border: 0; background: none; font: inherit; color: inherit; display: flex; align-items: center; }
h1, h2, ul { margin: 0; padding: 0; }
li { list-style: none; }
svg { display: block; flex: none; }
.defs { position: absolute; }
.dim { color: #999; }
.caret { flex: none; display: inline-block; border: 3px solid transparent; border-top: 4px solid currentColor; border-bottom: 0; }

.desktop { position: relative; min-height: 0; padding-right: 133px; }
.window { height: 100%; border: 1px solid #555; }
.frame { height: 100%; border: 3px solid #999; background: #fbfbfb; display: flex; flex-direction: column; }

.titlebar { height: 38px; flex: none; display: flex; padding: 4px 10px 0 12px; }
.app { margin-top: 4px; }
.tsep { width: 1px; height: 24px; margin-left: 4px; background: #c5c9cd; }
.titlebar h1 { flex: 1; text-align: center; padding-right: 96px; font: bold 12px/16px "Liberation Mono", "Noto Sans CJK SC", monospace; color: #222; }
.winctl { display: flex; gap: 15px; padding-top: 4px; height: 18px; margin-left: -88px; }
.winctl button { width: 12px; }

.tabs { height: 24px; flex: none; margin: 0 8px -1px 4px; display: flex; align-items: flex-end; position: relative; z-index: 1; }
.tab { height: 20px; padding: 0 12px 2px; border: 1px solid #c5c9cd; border-left: 0; background: #eeeff1; color: #707075; font-size: 14px; font-weight: bold; }
.tab.file { width: 55px; border-left: 1px solid #c5c9cd; margin-right: 8px; padding: 0 0 2px 7px; gap: 4px; }
.tab.first { border-left: 1px solid #c5c9cd; }
.tab.on { height: 24px; background: #fbfbfb; border-bottom-color: #fbfbfb; color: #222; }
.tabtools { margin-left: auto; align-self: flex-start; display: flex; gap: 7px; height: 13px; color: #333; align-items: center; }
.tabtools button { gap: 8px; }
.tabtools button:last-child { margin-left: 1px; }

.ribbon { flex: none; margin: 0 4px; display: flex; border: 1px solid #c5c9cd; }
.group { flex: none; border-right: 1px solid #c5c9cd; }
.g1 { width: 107px; } .g2 { width: 179px; } .g3 { width: 498px; } .g4 { width: 135px; } .g5 { width: 187px; }
.rest { flex: 1; border-right: 0; }
.tools { height: 77px; padding: 2px 0 0 3px; display: flex; align-items: flex-start; }
.col { display: grid; grid-template-rows: 24px 24px 24px; }
.item { padding-left: 4px; gap: 4px; white-space: nowrap; }
.item svg { width: 16px; height: 16px; }
.item .caret { margin-left: 4px; }
.big { flex-direction: column; padding-top: 3px; }
.big svg { width: 32px; height: 32px; }
.big span { margin-top: 9px; text-align: center; white-space: nowrap; }
.big .caret { vertical-align: middle; }
.w40 { width: 40px; } .w44 { width: 44px; } .w88 { width: 88px; } .w95 { width: 95px; } .w102 { width: 102px; }
.rsep { width: 1px; height: 66px; background: #dcdee0; }
.glabel { height: 22px; padding-bottom: 2px; border-top: 1px solid #c5c9cd; background: #eeeff1; display: flex; align-items: center; justify-content: center; gap: 5px; }

.qat { flex: none; height: 24px; padding-left: 12px; display: flex; gap: 8px; align-items: center; }
.qat button { gap: 7px; height: 24px; }
.qat svg { width: 16px; height: 16px; }
.qat svg.more { width: 9px; height: 10px; }
.picked.picked { width: 38px; border: 1px solid #c0c4c8; border-top: 2px solid #888; background: linear-gradient(90deg, transparent 22px, #c0c4c8 22px, #c0c4c8 23px, transparent 23px), linear-gradient(#eceef0, #dfe1e4); padding: 0 3px; gap: 7px; margin: 0 -4px 0 -3px; }
.qsep { width: 1px; height: 24px; background: #c5c9cd; margin: 0 1px 0 -3px; }

.work { flex: 1; min-height: 0; display: flex; padding: 0 4px; }
.side { width: 381px; flex: none; margin-right: 4px; padding: 13px 0 11px; display: flex; flex-direction: column; }
.stabs { display: flex; height: 30px; margin-bottom: -1px; position: relative; }
.stabs button { width: 30px; border: 1px solid #c5c9cd; border-left: 0; background: #eeeff1; justify-content: center; }
.stabs .on { border-left: 1px solid #c5c9cd; background: #fbfbfb; border-bottom-color: #fbfbfb; }
.panels { flex: 1; min-height: 0; border: 1px solid #c5c9cd; border-right-width: 3px; border-bottom-width: 2px; display: flex; flex-direction: column; }
.top { height: 375px; border-bottom: 1px solid #c5c9cd; }
.panel header { height: 29px; border-bottom: 1px solid #c5c9cd; display: flex; align-items: center; padding: 0 4px 0 6px; gap: 5px; }
.model header { height: 33px; padding-top: 4px; }
.panel h2 { font-size: 13px; line-height: 14px; font-weight: bold; }
.ptools { margin-left: auto; display: flex; gap: 8px; }
.ptools button { gap: 10px; }
.down { flex: none; border: 5px solid transparent; border-top: 8px solid #888; border-bottom: 0; }
.right { flex: none; }
i.right { border: 4px solid transparent; border-left: 7px solid #888; border-right: 0; }
.t li { height: 16px; display: flex; align-items: center; white-space: pre; }
.t b { font: 10px/12px "Liberation Mono", monospace; }
.t li > b { padding-top: 2px; }
.root { padding-left: 4px; gap: 7px; }
.l1 { padding-left: 7px; gap: 7px; }
.l1 svg + * { margin-left: -4px; }
.l1.p svg + * { margin-left: 0; }
.l2 { padding-left: 30px; gap: 7px; }
.m { padding-left: 24px; gap: 3px; }
.m.open { padding-left: 10px; gap: 3px; }
.m.open svg { margin-left: 4px; }

.stage { flex: 1; min-width: 0; display: flex; flex-direction: column; }
.canvas { flex: 1; min-height: 0; position: relative; background: #32312d; }
.drawing { overflow: hidden; }
.w { stroke: #fff; } .y { stroke: #ff0; } .g { stroke: #168c2e; } .o { stroke: #b87838; }
.a { fill: #ff0; }
.dash { stroke-dasharray: 2 2; }
.iso * { stroke-width: 3px; }
.dims { fill: #ff0; font: 200 18px "DejaVu Sans Light", "DejaVu Sans", sans-serif; }
.dims .cjk { font: 11px "Noto Sans CJK SC", sans-serif; }
.info { fill: #5d5d59; font-size: 12px; }
.viewbar { position: absolute; left: 590px; top: 7px; display: flex; border: 1px solid #c5c9cd; background: #eeeff1; padding: 0 5px 0 4px; }
.viewbar button { width: 27px; height: 26px; background: #fff; border-right: 1px solid #c5c9cd; justify-content: center; position: relative; }
.viewbar button:first-child { border-left: 1px solid #c5c9cd; }
.viewbar button:last-child { width: 29px; }
.viewbar svg { width: 16px; height: 16px; }
.viewbar .more::after { content: ""; position: absolute; right: 2px; bottom: 2px; border: 2px solid #666; border-top-color: transparent; border-left-color: transparent; }

.sheets { height: 28px; flex: none; margin-left: -2px; padding: 0 0 3px 3px; display: flex; align-items: stretch; border: 1px solid #dcdde0; border-width: 1px 1px 0; background: linear-gradient(#dcdde0, #dcdde0) 0 4px / 100% 1px no-repeat; }
.n { padding-top: 4px; margin-right: 8px; }
.n + .n { margin-right: 7px; }
.n:nth-child(4) { margin-right: 8px; }
.plus { width: 21px; margin: 4px 0 2px; border: 1px solid #c5c9cd; background: #eeeff1; justify-content: center; }
.page { width: 74px; margin-top: 4px; border: 1px solid #c5c9cd; border-top: 0; border-left: 0; background: #fff; justify-content: center; font-size: 13px; font-weight: bold; gap: 6px; padding: 0 2px 2px 0; color: #222; }

.status { height: 33px; flex: none; border-top: 2px solid #999; background: #eeeff1; display: flex; align-items: center; padding: 0 18px 0 6px; }
.sb { width: 22px; height: 22px; border: 1px solid #c5c9cd; justify-content: center; margin-right: 4px; }
.sb.in { border-top: 2px solid #888; background: #e2e4e8; }
.ssep { width: 1px; height: 24px; background: #c5c9cd; margin-left: 6px; }
.status .right { margin-left: auto; display: flex; align-items: center; }
.far { margin: 0 0 0 35px; }
.tight { margin: 0 3px 0 0; }
.find { width: 40px; height: 22px; border: 1px solid #b8bcc0; border-radius: 3px; background: linear-gradient(#fff, #dfe1e4); justify-content: center; margin-right: 3px; }
select {
  appearance: none; width: 178px; height: 20px; margin-left: 93px; padding: 0 4px;
  border: 1px solid #c5c9cd; border-radius: 0; color: #333; font: 12px/16px "Noto Sans CJK SC", sans-serif;
  background:
    linear-gradient(#c5c9cd, #c5c9cd) right 13px top 0 / 1px 100% no-repeat,
    linear-gradient(to top right, transparent 50%, #777 50%) right 6px center / 4px 6px no-repeat,
    linear-gradient(to top left, transparent 50%, #777 50%) right 2px center / 4px 6px no-repeat,
    #fbfbfb;
}

.speed { position: absolute; right: 16px; top: 868px; width: 121px; height: 60px; color: #fff; }
.pill { position: absolute; right: 0; top: 9px; width: 98px; height: 42px; border-radius: 21px; background: #1a2434; border: 1px solid #0c1424; padding-left: 38px; }
.pill div { height: 20px; display: flex; align-items: center; }
.pill div + div { border-top: 1px solid #2a3446; }
.pill span { width: 26px; text-align: right; font: 12px "Open Sans", sans-serif; }
.pill small { font: 10px "Open Sans", sans-serif; color: #8a93a0; }
.dial { position: absolute; left: 0; top: 0; width: 60px; height: 60px; border-radius: 50%; background: linear-gradient(#33425c, #243650); border: 1px solid #101a2c; display: flex; align-items: baseline; justify-content: center; }
.dial svg { position: absolute; left: 0; top: 0; }
.dial span { font: 300 24px/58px "Open Sans", sans-serif; }
.dial small { font: 9px "Open Sans", sans-serif; }

.taskbar { background: #d4d0c8; border-top: 1px solid #d4d0c8; box-shadow: inset 0 1px #fff; display: flex; align-items: flex-start; padding: 3px 2px 2px; color: #000; }
.taskbar button { height: 38px; border: 1px solid; border-color: #fff #404040 #404040 #fff; box-shadow: inset -1px -1px #808080; justify-content: center; }
.taskbar .start { width: 47px; gap: 1px; margin-right: 9px; padding-bottom: 2px; white-space: nowrap; }
.task { width: 48px; margin-right: 2px; }
.stack { width: 48px; margin-right: 2px; display: flex; }
.taskbar .on { width: 40px; margin: 0; border-color: #404040 #fff #fff #404040; background: #eceae6; box-shadow: none; }
.under { width: 4px; height: 38px; border-top: 2px solid #404040; border-right: 1px solid #fff; }
.ime { margin: 11px 8px 0 auto; }
.tray { width: 150px; height: 38px; border: 1px solid; border-color: #808080 #fff #fff #808080; display: flex; align-items: center; padding: 0 1px 0 6px; gap: 7px; }
.tray time { flex: 1; text-align: center; font: 12px/16px "Noto Sans CJK SC", sans-serif; }

.mark { position: fixed; right: 5px; bottom: 5px; width: 206px; height: 62px; background: rgba(255, 255, 255, .35); display: flex; pointer-events: none; }
.mark > div { margin-left: -4px; display: flex; flex-direction: column; }
.mark strong { margin: 4px 0 0 12px; font: 900 29px/30px "Noto Sans CJK SC", sans-serif; color: #16825a; opacity: .85; }
.mark span { font: 16px/26px "Liberation Sans", sans-serif; color: #5fb89a; opacity: .5; margin-top: 2px; }
```
